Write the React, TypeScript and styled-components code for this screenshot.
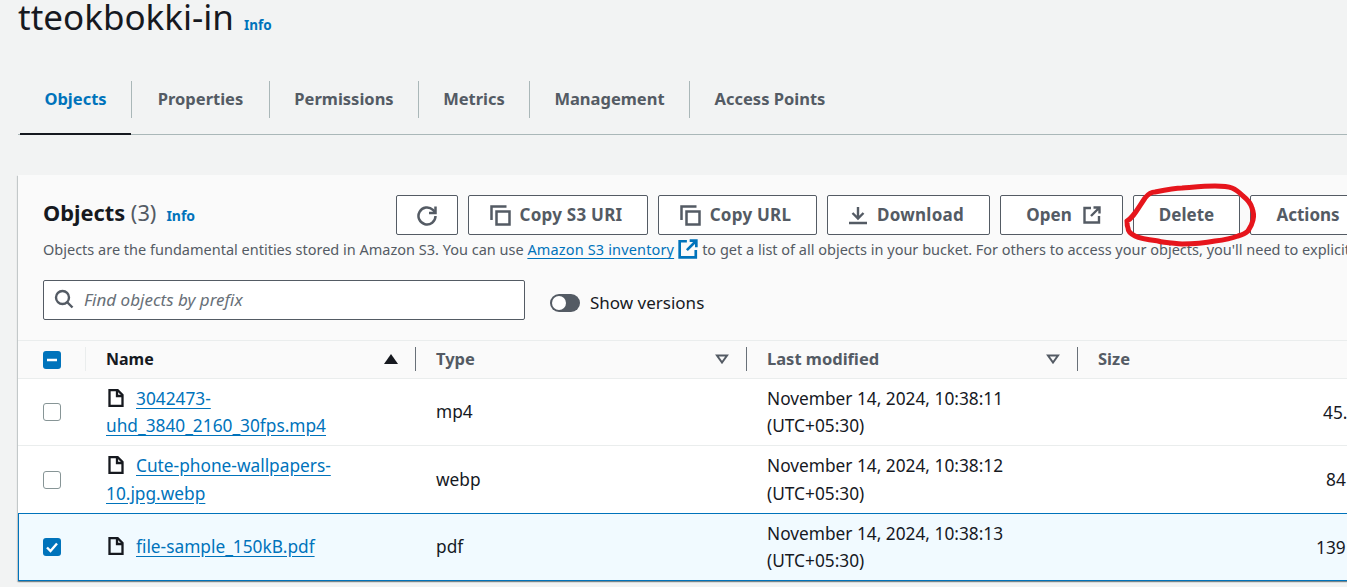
import styled, { createGlobalStyle } from 'styled-components';

const GlobalStyle = createGlobalStyle`
html, body {
  margin: 0;
  padding: 0;
  background: #f2f3f3;
  overflow: hidden;
}
* { box-sizing: border-box; }
`;

const Page = styled.main`
  position: relative;
  width: 1347px;
  height: 587px;
  overflow: hidden;
  background: #f2f3f3;
  font-family: "Noto Sans", "Open Sans", sans-serif;
  color: #16191f;
`;

const Heading = styled.header`
  display: flex;
  align-items: baseline;
  gap: 10px;
  height: 62px;
  padding: 0 0 0 18px;
`;

const Title = styled.h1`
  margin: 0;
  font-size: 35px;
  line-height: 33px;
  font-weight: 400;
  color: #16191f;
`;

const InfoLink = styled.a<{ $small?: boolean }>`
  color: #0073bb;
  font-size: ${({ $small }) => ($small ? '14px' : '13.500px')};
  font-weight: 700;
`;

const TabBar = styled.nav`
  display: flex;
  align-items: stretch;
  height: 73px;
  margin-left: 18px;
  padding-left: 2px;
  border-bottom: 1px solid #aab7b8;
`;

const Tab = styled.div<{ $active?: boolean; $width: number }>`
  position: relative;
  display: flex;
  align-items: center;
  justify-content: center;
  width: ${({ $width }) => $width}px;
  height: 37px;
  margin-top: 19px;
  padding-bottom: 2px;
  font-size: 16.500px;
  font-weight: 700;
  color: ${({ $active }) => ($active ? '#0073bb' : '#545b64')};
  border-right: 1px solid #aab7b8;

  &:last-child { border-right: 0; }

  ${({ $active }) =>
    $active &&
    `&::after {
      content: '';
      position: absolute;
      left: 0;
      right: 0;
      bottom: -17px;
      height: 2px;
      background: #16191f;
    }`}
`;

const Card = styled.section`
  width: 1500px;
  margin: 40px 0 0 18px;
  background: #fafafa;
  box-shadow: 0 1px 1px rgba(0, 28, 36, 0.3), 1px 1px 1px rgba(0, 28, 36, 0.15), -1px 1px 1px rgba(0, 28, 36, 0.15);
`;

const CardHead = styled.div`
  padding: 20px 0 0 25px;
  height: 165px;
`;

const TitleRow = styled.div`
  display: flex;
  align-items: center;
  height: 40px;
`;

const CardTitle = styled.div`
  display: flex;
  align-items: baseline;
  gap: 10px;
  width: 353px;
  height: 40px;
  padding-top: 2px;
`;

const CardName = styled.h2`
  margin: 0;
  font-size: 21.800px;
  line-height: 32px;
  font-weight: 700;
  color: #16191f;
`;

const Count = styled.span`
  font-weight: 400;
  color: #545b64;
`;

const Toolbar = styled.div`
  display: flex;
  gap: 10px;
`;

const Button = styled.button<{ $width: number; $gap?: number; $spaced?: boolean; $nudge?: number }>`
  display: flex;
  align-items: center;
  justify-content: center;
  gap: ${({ $gap }) => $gap ?? 9}px;
  flex: none;
  width: ${({ $width }) => $width}px;
  height: 40px;
  padding: 0 ${({ $spaced }) => ($spaced ? 5 : 0)}px 2px ${({ $nudge }) => $nudge ?? 0}px;
  background: #ffffff;
  border: 1px solid #545b64;
  border-radius: 2px;
  color: #545b64;
  font-family: inherit;
  font-size: 17px;
  font-weight: 700;
  letter-spacing: ${({ $spaced }) => ($spaced ? '0.25px' : '0')};

  svg { margin-top: 2px; flex: none; }
`;

const Description = styled.p`
  margin: 3px 0 0;
  font-size: 14.500px;
  line-height: 22px;
  color: #545b64;
  white-space: nowrap;
`;

const TextLink = styled.a`
  color: #0073bb;
  letter-spacing: 0.15px;
  text-decoration: underline;
  text-underline-offset: 3px;
`;

const ExternalMark = styled.span`
  display: inline-flex;
  vertical-align: -4px;
  margin: 0 4px;
  color: #0073bb;
`;

const FilterRow = styled.div`
  display: flex;
  align-items: center;
  margin-top: 20px;
`;

const SearchBox = styled.div`
  display: flex;
  align-items: center;
  gap: 10px;
  width: 482px;
  height: 40px;
  padding: 0 0 2px 10px;
  background: #ffffff;
  border: 1px solid #545b64;
  border-radius: 2px;
  color: #687078;
  font-size: 17px;
  font-style: italic;
`;

const VersionToggle = styled.div`
  display: flex;
  align-items: center;
  gap: 10px;
  margin: 6px 0 0 25px;
  font-size: 17px;
  color: #16191f;
`;

const VersionLabel = styled.span`
  padding-bottom: 2px;
`;

const ToggleTrack = styled.span`
  position: relative;
  display: block;
  width: 30px;
  height: 18px;
  border-radius: 9px;
  background: #545b64;

  &::after {
    content: '';
    position: absolute;
    left: 2px;
    top: 2px;
    width: 14px;
    height: 14px;
    border-radius: 50%;
    background: #ffffff;
  }
`;

const Table = styled.div`
  border-top: 1px solid #eaeded;
`;

const grid = `
  display: grid;
  grid-template-columns: 68px 330px 331px 331px 1fr;
`;

const HeaderRow = styled.div`
  ${grid}
  height: 38px;
  background: #fafafa;
  border-bottom: 1px solid #eaeded;
`;

const HeaderCell = styled.div<{ $divider?: boolean; $muted?: boolean; $light?: boolean; $check?: boolean }>`
  position: relative;
  display: flex;
  align-items: center;
  justify-content: space-between;
  padding: ${({ $check }) => ($check ? '0 0 0 25px' : '0 18px 2px 20px')};
  font-size: ${({ $muted }) => ($muted ? '16.500px' : '16px')};
  font-weight: 700;
  color: ${({ $muted }) => ($muted ? '#545b64' : '#16191f')};

  &::after {
    content: '';
    display: ${({ $divider }) => ($divider ? 'block' : 'none')};
    position: absolute;
    right: 0;
    top: 6px;
    bottom: 7px;
    width: 1px;
    background: ${({ $light }) => ($light ? '#eaeded' : '#687078')};
  }
`;

const SelectCell = styled.div`
  display: flex;
  align-items: center;
  padding-left: 25px;
`;

const Row = styled.div<{ $selected?: boolean; $height: number }>`
  ${grid}
  position: relative;
  height: ${({ $height }) => $height}px;
  background: ${({ $selected }) => ($selected ? '#f1faff' : '#ffffff')};
  border-bottom: 1px solid ${({ $selected }) => ($selected ? '#0073bb' : '#eaeded')};
  box-shadow: ${({ $selected }) => ($selected ? '0 -1px 0 #0073bb, inset 1px 0 0 #0073bb' : 'none')};
`;

const CheckBox = styled.span<{ $on?: boolean }>`
  display: flex;
  align-items: center;
  justify-content: center;
  width: 18px;
  height: 18px;
  border-radius: 3px;
  background: ${({ $on }) => ($on ? '#0073bb' : '#ffffff')};
  border: ${({ $on }) => ($on ? '0' : '1.500px solid #879596')};
`;

const NameCell = styled.div`
  align-self: center;
  padding-left: 20px;
  width: 250px;
  box-sizing: content-box;
  font-size: 17.300px;
  line-height: 27.500px;
`;

const FileMark = styled.span`
  display: inline-flex;
  vertical-align: -2px;
  margin: 0 12px 0 2px;
  color: #16191f;
`;

const FileLink = styled.a`
  color: #0073bb;
  text-decoration: underline;
  text-underline-offset: 3px;
`;

const TextCell = styled.div`
  align-self: center;
  padding-left: 20px;
  font-size: 17.300px;
  line-height: 27.500px;
  color: #16191f;
`;

const SizeCell = styled.div<{ $offset: number }>`
  align-self: center;
  margin-left: ${({ $offset }) => 245 + $offset}px;
  font-size: 17.300px;
  white-space: nowrap;
  color: #16191f;
`;

const Scribble = styled.svg`
  position: absolute;
  left: 0;
  top: 0;
  pointer-events: none;
`;

function CopyIcon() {
  return (
    <svg width="22" height="22" viewBox="0 0 22 22" fill="none" stroke="currentColor" strokeWidth="2.500">
      <path d="M2.500 16V2.500h15" />
      <rect x="7.500" y="7.500" width="13" height="13" />
    </svg>
  );
}

function ExternalIcon({ size = 18 }: { size?: number }) {
  return (
    <svg width={size} height={size} viewBox="0 0 18 18" fill="none" stroke="currentColor" strokeWidth="2.400">
      <path d="M8 2H1.500v14.500h14.500V10" />
      <path d="M10.500 1.500H16.500V7.500M16 2L8 10" />
    </svg>
  );
}

function FileIcon() {
  return (
    <svg width="16" height="18" viewBox="0 0 16 18" fill="none" stroke="currentColor" strokeWidth="2.300">
      <path d="M1.500 1h8L14.500 6v11H1.500z" />
      <path d="M9 1v6h6" />
    </svg>
  );
}

const files = [
  {
    id: 'mp4',
    name: '3042473-uhd_3840_2160_30fps.mp4',
    type: 'mp4',
    time: '10:38:11',
    size: '45.',
    sizeOffset: 0,
    height: 67,
  },
  {
    id: 'webp',
    name: 'Cute-phone-wallpapers-10.jpg.webp',
    type: 'webp',
    time: '10:38:12',
    size: '84',
    sizeOffset: 3,
    height: 68,
  },
  {
    id: 'pdf',
    name: 'file-sample_150kB.pdf',
    type: 'pdf',
    time: '10:38:13',
    size: '139',
    sizeOffset: -7,
    height: 67,
    selected: true,
  },
];

export default function App() {
  return (
    <Page>
      <GlobalStyle />
      <Heading>
        <Title>tteokbokki-in</Title>
        <InfoLink>Info</InfoLink>
      </Heading>

      <TabBar>
        <Tab $active $width={112}>Objects</Tab>
        <Tab $width={138}>Properties</Tab>
        <Tab $width={149}>Permissions</Tab>
        <Tab $width={111}>Metrics</Tab>
        <Tab $width={160}>Management</Tab>
        <Tab $width={160}>Access Points</Tab>
      </TabBar>

      <Card>
        <CardHead>
          <TitleRow>
            <CardTitle>
              <CardName>
                Objects <Count>(3)</Count>
              </CardName>
              <InfoLink $small>Info</InfoLink>
            </CardTitle>
            <Toolbar>
              <Button $width={62}>
                <svg width="22" height="22" viewBox="0 0 22 22" fill="none" stroke="currentColor" strokeWidth="2.500">
                  <path d="M19.500 12a8.500 8.500 0 1 1-2.600-6.100L19 8" />
                  <path d="M19.500 2.500v6.500h-6.500" />
                </svg>
              </Button>
              <Button $width={180} $spaced><CopyIcon />Copy S3 URI</Button>
              <Button $width={159} $spaced><CopyIcon />Copy URL</Button>
              <Button $width={163} $spaced>
                <svg width="20" height="20" viewBox="0 0 20 20" fill="none" stroke="currentColor" strokeWidth="2.400">
                  <path d="M10 2v11M4.500 8l5.500 5.500L15.500 8M1 18h18" />
                </svg>
                Download
              </Button>
              <Button $width={123} $gap={11} $nudge={4}>Open <ExternalIcon /></Button>
              <Button $width={107}>Delete</Button>
              <Button $width={116}>Actions</Button>
            </Toolbar>
          </TitleRow>
          <Description>
            Objects are the fundamental entities stored in Amazon S3. You can use{' '}
            <TextLink>Amazon S3 inventory</TextLink>
            <ExternalMark><ExternalIcon size={20} /></ExternalMark>
            to get a list of all objects in your bucket. For others to access your objects, you'll need to explicitly grant them permissions.
          </Description>
          <FilterRow>
            <SearchBox>
              <svg width="20" height="20" viewBox="0 0 20 20" fill="none" stroke="#545b64" strokeWidth="2.400">
                <circle cx="8.500" cy="8.500" r="6.500" />
                <path d="M13 13l5.500 5.500" />
              </svg>
              Find objects by prefix
            </SearchBox>
            <VersionToggle>
              <ToggleTrack />
              <VersionLabel>Show versions</VersionLabel>
            </VersionToggle>
          </FilterRow>
        </CardHead>

        <Table>
          <HeaderRow>
            <HeaderCell $check $divider $light>
              <CheckBox $on>
                <svg width="12" height="12" viewBox="0 0 12 12" stroke="#fff" strokeWidth="2.500">
                  <path d="M1 6h10" />
                </svg>
              </CheckBox>
            </HeaderCell>
            <HeaderCell $divider>
              Name
              <svg width="14" height="10" viewBox="0 0 14 10" fill="#16191f">
                <path d="M7 0l7 10H0z" />
              </svg>
            </HeaderCell>
            <HeaderCell $divider $muted>
              Type
              <svg width="14" height="10" viewBox="0 0 14 10" fill="none" stroke="#545b64" strokeWidth="2">
                <path d="M2 1.500h10L7 8.500z" />
              </svg>
            </HeaderCell>
            <HeaderCell $divider $muted>
              Last modified
              <svg width="14" height="10" viewBox="0 0 14 10" fill="none" stroke="#545b64" strokeWidth="2">
                <path d="M2 1.500h10L7 8.500z" />
              </svg>
            </HeaderCell>
            <HeaderCell $muted>Size</HeaderCell>
          </HeaderRow>

          {files.map((file) => (
            <Row key={file.id} $selected={file.selected} $height={file.height}>
              <SelectCell>
                <CheckBox $on={file.selected}>
                  {file.selected && (
                    <svg width="14" height="14" viewBox="0 0 14 14" fill="none" stroke="#fff" strokeWidth="2.400">
                      <path d="M2 7.500l3.500 3.500L12 3.500" />
                    </svg>
                  )}
                </CheckBox>
              </SelectCell>
              <NameCell>
                <FileMark><FileIcon /></FileMark>
                <FileLink>{file.name}</FileLink>
              </NameCell>
              <TextCell>{file.type}</TextCell>
              <TextCell>
                November 14, 2024, {file.time}
                <br />
                (UTC+05:30)
              </TextCell>
              <SizeCell $offset={file.sizeOffset}>{file.size}</SizeCell>
            </Row>
          ))}
        </Table>
      </Card>

      <Scribble width="1347" height="587" viewBox="0 0 1347 587" fill="none">
        <path
          d="M1127 221C1133 218 1137 210 1145 198C1149 193 1152 192 1155 192C1165 190 1175 188 1182 188C1195 187 1205 186 1215 186C1222 186 1227 186 1232 188C1237 190 1240 193 1243 196C1248 200 1251 204 1252 208C1254 213 1254 216 1253 220C1252 225 1250 228 1248 231C1245 234 1242 235 1238 236C1230 239 1223 240 1215 241C1205 243 1195 244 1182 244C1173 243 1165 243 1158 241C1150 240 1141 239 1135 236C1131 234 1128 231 1128 228C1127 226 1127 224 1127 221"
          stroke="#e6151c"
          strokeWidth="5"
          strokeLinecap="round"
          strokeLinejoin="round"
        />
      </Scribble>
    </Page>
  );
}
